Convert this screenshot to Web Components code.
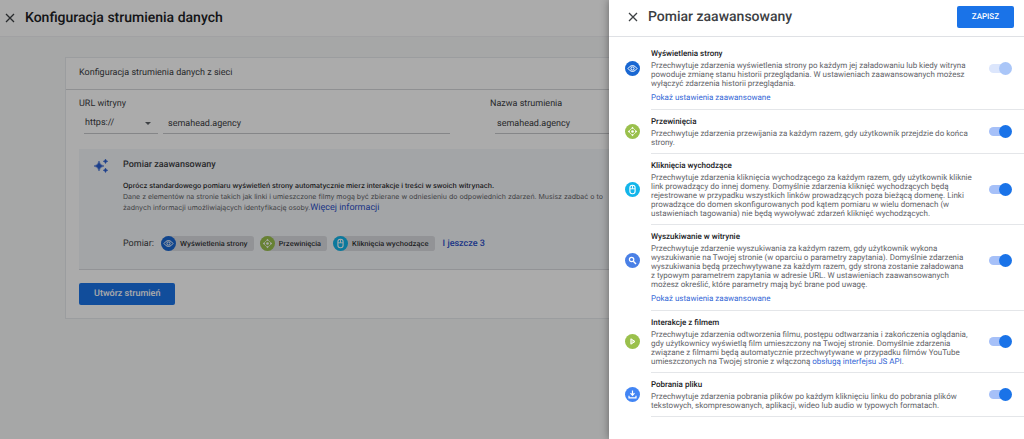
<!DOCTYPE html>
<html lang="pl">
<head>
<meta charset="utf-8">
<title>Konfiguracja strumienia danych</title>
<style>
  html, body { height: 100%; }
  body { margin: 0; font: 8px/12px Roboto, "Liberation Sans", sans-serif; color: #3c4043; background: #f8f9fa; overflow: hidden; text-rendering: geometricPrecision; }
</style>
</head>
<body>
<stream-app></stream-app>

<script>
const GLYPHS = {
  eye: ['#1967d2', '<path d="M3 7.5Q5 4.500 7.5 4.500T12 7.5Q10 10.500 7.5 10.500T3 7.5Z" fill="none" stroke="#fff" stroke-width="1"/><circle cx="7.5" cy="7.5" r="1.6" fill="none" stroke="#fff" stroke-width="1"/>'],
  scroll: ['#9ac04c', '<path d="M7.5 2.8L9.2 4.8H5.8ZM7.5 12.2L5.8 10.2H9.2ZM2.8 7.5L4.8 5.8V9.2ZM12.2 7.5L10.2 9.2V5.8Z" fill="#fff"/><circle cx="7.5" cy="7.5" r="1.3" fill="#fff"/><path d="M5.2 5.2L6 6M9.8 5.2L9 6M5.2 9.8L6 9M9.8 9.8L9 9" stroke="#fff" stroke-width=".8"/>'],
  mouse: ['#12b5ea', '<rect x="4.9" y="3.3" width="5.2" height="8.4" rx="2.4" fill="none" stroke="#fff" stroke-width="1.1"/><path d="M5 6.8H10M7.5 3.4V6.8" stroke="#fff" stroke-width=".9"/>'],
  search: ['#4a80e6', '<circle cx="6.6" cy="6.5" r="2.2" fill="none" stroke="#fff" stroke-width="1.2"/><path d="M8.3 8.2L11 10.9" stroke="#fff" stroke-width="1.4"/>'],
  play: ['#9ac04c', '<path d="M5.9 4.8L10 7.5L5.9 10.2Z" fill="#fff" fill-opacity=".5" stroke="#fff" stroke-width="1" stroke-linejoin="round"/>'],
  download: ['#4285f4', '<path d="M7.5 3.5V8M5.5 6.2L7.5 8.3L9.5 6.2M4 8.8V10.9H11V8.8" fill="none" stroke="#fff" stroke-width="1.2"/>']
};

function define(name, html, setup) {
  const template = document.createElement('template');
  template.innerHTML = html;
  customElements.define(name, class extends HTMLElement {
    constructor() {
      super();
      this.attachShadow({ mode: 'open' }).append(template.content.cloneNode(true));
    }
    connectedCallback() { if (setup) setup(this, this.shadowRoot); }
  });
}

define('round-icon', `
  <style>
    :host { display: block; flex: none; width: 15px; height: 15px; }
    svg { display: block; width: 100%; height: 100%; }
  </style>
  <svg viewBox="0 0 15 15" aria-hidden="true"></svg>`,
  (host, root) => {
    const [color, shapes] = GLYPHS[host.getAttribute('name')];
    root.querySelector('svg').innerHTML = `<circle cx="7.5" cy="7.5" r="7.5" fill="${color}"/>${shapes}`;
  });

define('close-button', `
  <style>
    :host { display: block; flex: none; }
    button { display: block; padding: 0; border: 0; background: none; color: #3c4043; }
    svg { display: block; width: 10px; height: 10px; }
  </style>
  <button type="button" aria-label="Zamknij"><svg viewBox="0 0 10 10"><path d="M1 1L9 9M9 1L1 9" fill="none" stroke="currentColor" stroke-width="1.3"/></svg></button>`);

define('primary-button', `
  <style>
    :host { display: block; flex: none; font-size: 9px; }
    button { display: block; height: 22px; padding: 0 15px; border: 0; border-radius: 2px; background: #1a73e8; color: #fff; font: inherit; font-weight: 500; line-height: 22px; text-rendering: inherit; }
  </style>
  <button type="button"><slot></slot></button>`);

define('feature-chip', `
  <style>
    :host { display: flex; align-items: center; height: 15px; padding-right: 6px; gap: 4px; border-radius: 8px 3px 3px 8px; background: #dadce0; color: #202124; font-weight: 500; }
  </style>
  <slot></slot>`,
  (host, root) => {
    const icon = document.createElement('round-icon');
    icon.setAttribute('name', host.getAttribute('icon'));
    root.querySelector('slot').before(icon);
  });

define('feature-row', `
  <style>
    :host { display: grid; grid-template-columns: 26px 1fr 35px; column-gap: 16px; padding-top: 6px; }
    .icon { grid-area: 1 / 1; align-self: center; margin-left: 16px; }
    .text { grid-area: 1 / 2; }
    h3 { margin: 0 0 2px; font-size: 8px; line-height: 11px; font-weight: 500; color: #202124; }
    p { margin: 0; line-height: 9px; color: #5f6368; }
    ::slotted(a) { color: #3367d6; text-decoration: none; }
    .more { grid-area: 2 / 2; line-height: 10px; }
    ::slotted(a[slot]) { display: block; width: max-content; margin-top: 5px; }
    .line { grid-area: 3 / 2 / 4 / 4; margin-top: 6px; border-bottom: 1px solid #e4e6e9; }
    input { appearance: none; grid-area: 1 / 3; align-self: center; display: flex; align-items: center; justify-content: flex-end; width: 23px; height: 13px; margin: 0; }
    input::before { content: ""; flex: 1; height: 9px; margin-right: -7px; border-radius: 5px; background: #a6c0f8; }
    input::after { content: ""; width: 13px; height: 13px; border-radius: 50%; background: #1a73e8; }
    input:disabled::before { background: #dce6fc; }
    input:disabled::after { background: #aac6f8; }
  </style>
  <div class="icon"></div>
  <div class="text"><h3 id="name"><slot name="name"></slot></h3><p><slot></slot></p></div>
  <input type="checkbox" checked aria-labelledby="name">
  <div class="more"><slot name="more"></slot></div>
  <div class="line"></div>`,
  (host, root) => {
    root.querySelector('.icon').innerHTML = `<round-icon name="${host.getAttribute('icon')}"></round-icon>`;
    root.querySelector('input').disabled = host.hasAttribute('locked');
  });

define('measurement-drawer', `
  <style>
    :host { display: block; background: #fff; }
    header { display: flex; align-items: center; height: 34px; padding: 0 10px 2px 19px; border-bottom: 1px solid #dfe1e5; }
    h2 { flex: 1; margin: 0 0 0 10px; font-size: 14px; line-height: 20px; font-weight: 500; color: #3c4043; }
    primary-button { font-size: 8px; }
    main { padding-top: 5px; }
  </style>
  <header><close-button></close-button><h2>Pomiar zaawansowany</h2><primary-button>ZAPISZ</primary-button></header>
  <main>
    <feature-row icon="eye" locked><span slot="name">Wyświetlenia strony</span>Przechwytuje zdarzenia wyświetlenia strony po każdym jej załadowaniu lub kiedy witryna powoduje zmianę stanu historii przeglądania. W ustawieniach zaawansowanych możesz wyłączyć zdarzenia historii przeglądania.<a slot="more" href="#">Pokaż ustawienia zaawansowane</a></feature-row>
    <feature-row icon="scroll"><span slot="name">Przewinięcia</span>Przechwytuje zdarzenia przewijania za każdym razem, gdy użytkownik przejdzie do końca strony.</feature-row>
    <feature-row icon="mouse"><span slot="name">Kliknięcia wychodzące</span>Przechwytuje zdarzenia kliknięcia wychodzącego za każdym razem, gdy użytkownik kliknie link prowadzący do innej domeny. Domyślnie zdarzenia kliknięć wychodzących będą rejestrowane w przypadku wszystkich linków prowadzących poza bieżącą domenę. Linki prowadzące do domen skonfigurowanych pod kątem pomiaru w wielu domenach (w ustawieniach tagowania) nie będą wywoływać zdarzeń kliknięć wychodzących.</feature-row>
    <feature-row icon="search"><span slot="name">Wyszukiwanie w witrynie</span>Przechwytuje zdarzenie wyszukiwania za każdym razem, gdy użytkownik wykona wyszukiwanie na Twojej stronie (w oparciu o parametry zapytania). Domyślnie zdarzenia wyszukiwania będą przechwytywane za każdym razem, gdy strona zostanie załadowana z&nbsp;typowym parametrem zapytania w adresie URL. W ustawieniach zaawansowanych możesz określić, które parametry mają być brane pod uwagę.<a slot="more" href="#">Pokaż ustawienia zaawansowane</a></feature-row>
    <feature-row icon="play"><span slot="name">Interakcje z filmem</span>Przechwytuje zdarzenia odtworzenia filmu, postępu odtwarzania i zakończenia oglądania, gdy użytkownicy wyświetlą film umieszczony na Twojej stronie. Domyślnie zdarzenia związane z filmami będą automatycznie przechwytywane w przypadku filmów YouTube umieszczonych na Twojej stronie z włączoną <a href="#">obsługą interfejsu JS API</a>.</feature-row>
    <feature-row icon="download"><span slot="name">Pobrania pliku</span>Przechwytuje zdarzenia pobrania plików po każdym kliknięciu linku do pobrania plików tekstowych, skompresowanych, aplikacji, wideo lub audio w typowych formatach.</feature-row>
  </main>`);

define('measurement-info', `
  <style>
    :host { display: grid; grid-template-columns: 14px 1fr; column-gap: 15px; padding: 10px 15px 18px; background: #f4f6f9; border-bottom: 1px solid #dadce0; }
    svg { width: 14px; height: 14px; fill: #2b5fd0; }
    h3 { margin: 0 0 9px; font-size: 9px; line-height: 12px; font-weight: 500; }
    p { margin: 0; font-family: Inter, Roboto, sans-serif; font-size: 7px; line-height: 11px; white-space: nowrap; color: #5f6368; }
    b { font-weight: 500; color: #202124; }
    a { color: #2b50c8; font-family: Roboto, "Liberation Sans", sans-serif; font-size: 9px; text-decoration: none; }
    .chips { display: flex; align-items: center; margin-top: 22px; white-space: nowrap; }
    .chips > span { font-size: 9px; margin-right: 7px; }
    feature-chip { margin-right: 6px; font-family: Inter, Roboto, sans-serif; font-size: 7px; }
    .chips a { margin-left: 2px; font-weight: 500; }
  </style>
  <svg viewBox="0 0 14 14" aria-hidden="true"><path d="M5 2Q5.6 6.4 10 7Q5.6 7.600 5 12Q4.400 7.600 0 7Q4.400 6.400 5 2ZM11.500 0Q11.800 2 13.800 2.300Q11.800 2.600 11.500 4.600Q11.200 2.600 9.200 2.300Q11.200 2 11.500 0ZM11.500 9Q11.800 11 13.800 11.300Q11.800 11.600 11.500 13.600Q11.200 11.600 9.200 11.300Q11.200 11 11.500 9Z" stroke="#2b5fd0" stroke-width=".5"/></svg>
  <div>
    <h3>Pomiar zaawansowany</h3>
    <p><b>Oprócz standardowego pomiaru wyświetleń strony automatycznie mierz interakcje i treści w swoich witrynach.</b></p>
    <p>Dane z elementów na stronie takich jak linki i umieszczone filmy mogą być zbierane w odniesieniu do odpowiednich zdarzeń. Musisz zadbać o to</p>
    <p>żadnych informacji umożliwiających identyfikację osoby.<a href="#">Więcej informacji</a></p>
    <div class="chips"><span>Pomiar:</span><feature-chip icon="eye">Wyświetlenia strony</feature-chip><feature-chip icon="scroll">Przewinięcia</feature-chip><feature-chip icon="mouse">Kliknięcia wychodzące</feature-chip><a href="#">I jeszcze 3</a></div>
  </div>`);

define('stream-form', `
  <style>
    :host { display: block; background: #fff; border: 1px solid #e8eaed; }
    h2 { margin: 0; padding: 9px 13px; font-size: 9px; line-height: 13px; font-weight: 400; border-bottom: 1px solid #d5d7da; }
    .body { padding: 8px 13px 13px; }
    .fields { display: grid; grid-template-columns: 371px 1fr; column-gap: 40px; }
    label { display: block; font-size: 9px; line-height: 13px; }
    .row { display: flex; gap: 5px; margin: 3px 0 15px 5px; }
    input, .pick { box-sizing: border-box; height: 20px; border: 0; border-bottom: 1px solid #c6c8cb; }
    input, select { font: 9px/19px Roboto, "Liberation Sans", sans-serif; color: #3c4043; background: none; outline: 0; border-radius: 0; text-rendering: inherit; }
    input { flex: 1; min-width: 0; padding: 0 0 0 5px; }
    .solo input { padding-left: 2px; }
    .pick { display: flex; align-items: center; width: 74px; }
    select { appearance: none; flex: 1; height: 19px; padding: 0 0 0 1px; border: 0; }
    .pick svg { width: 6px; height: 3px; margin-right: 7px; fill: #5f6368; }
    primary-button { width: max-content; margin-top: 13px; }
  </style>
  <h2>Konfiguracja strumienia danych z sieci</h2>
  <div class="body">
    <div class="fields">
      <div><label for="url">URL witryny</label>
        <div class="row"><div class="pick"><select aria-label="Protokół"><option>https://</option><option>http://</option></select><svg viewBox="0 0 6 3"><path d="M0 0H6L3 3Z"/></svg></div><input id="url" type="text" value="semahead.agency"></div></div>
      <div><label for="stream">Nazwa strumienia</label>
        <div class="row solo"><input id="stream" type="text" value="semahead.agency"></div></div>
    </div>
    <measurement-info></measurement-info>
    <primary-button>Utwórz strumień</primary-button>
  </div>`);

define('stream-app', `
  <style>
    :host { display: block; position: relative; height: 100%; overflow: hidden; }
    header { display: flex; align-items: center; height: 35px; padding: 0 5px 1px; background: #fff; border-bottom: 1px solid #f0f1f3; }
    h1 { margin: 0 0 0 10px; font-size: 14px; line-height: 20px; font-weight: 500; color: #202124; }
    stream-form { margin: 20px 65px; }
    .scrim { position: absolute; inset: 0; background: rgba(0, 0, 0, .33); }
    measurement-drawer { position: absolute; inset: 0 0 0 auto; width: 415px; max-width: 100%; box-shadow: 0 0 8px rgba(0, 0, 0, .4); }
  </style>
  <header><close-button></close-button><h1>Konfiguracja strumienia danych</h1></header>
  <stream-form></stream-form>
  <div class="scrim"></div>
  <measurement-drawer></measurement-drawer>`);
</script>
</body>
</html>
